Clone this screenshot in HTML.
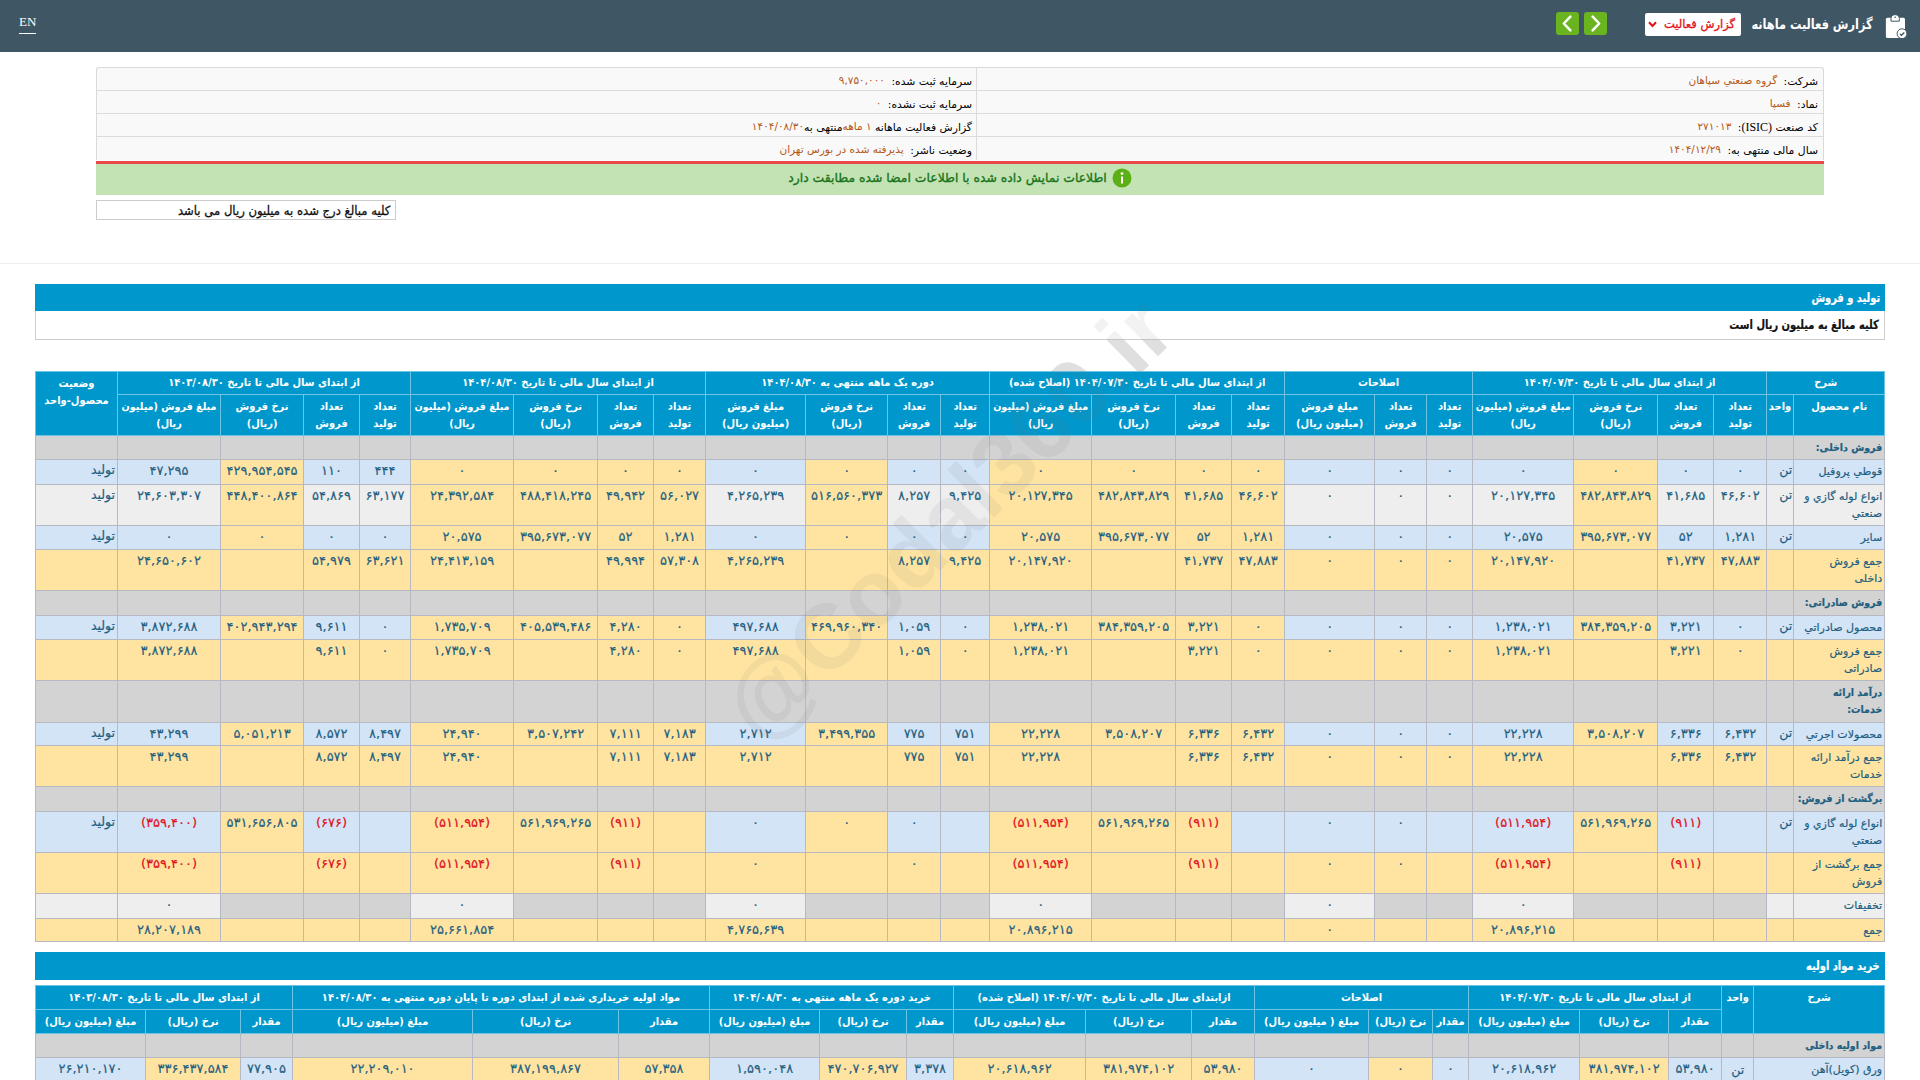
<!DOCTYPE html>
<html lang="fa" dir="rtl">
<head>
<meta charset="utf-8">
<title>گزارش فعالیت ماهانه</title>
<style>
html,body{margin:0;padding:0;background:#fff;}
body{width:1920px;height:1080px;overflow:hidden;position:relative;font-family:"DejaVu Sans","Liberation Sans",sans-serif;font-size:11px;color:#000;direction:rtl;}
.abs{position:absolute;}
#top{left:0;top:0;width:1920px;height:52px;background:#3f5765;}
#en{left:19px;top:14px;color:#fff;font-family:"Liberation Serif",serif;font-size:13px;direction:ltr;border-bottom:1px solid #fff;padding-bottom:4px;line-height:15px;}
#title{right:47px;top:13px;color:#fff;font-weight:bold;font-size:14px;transform:scaleX(0.9);transform-origin:right center;font-family:"DejaVu Sans Condensed","DejaVu Sans",sans-serif;font-stretch:condensed;line-height:22px;white-space:nowrap;}
#sel{left:1645px;top:13px;width:96px;height:23px;background:#fff;border-radius:2px;color:#e0141c;font-size:11.5px;line-height:22px;-webkit-text-stroke:0.3px #e0141c;white-space:nowrap;box-sizing:border-box;padding-right:6px;}
.gb{top:12px;width:23px;height:23px;background:#6ab41f;border-radius:3px;}
#info{left:96px;top:67px;width:1728px;border:1px solid #d9d9d9;border-bottom:none;box-sizing:border-box;border-radius:3px 3px 0 0;background:#f9f9f9;}
#info .r{height:23px;border-bottom:1px solid #dcdcdc;box-sizing:border-box;position:relative;line-height:26px;font-size:10.8px;white-space:nowrap;}
#info .r:last-child{border-bottom:none;}
#info .c1{position:absolute;right:0;width:847px;top:0;bottom:0;padding-right:5px;box-sizing:border-box;border-left:1px solid #dcdcdc;}
#info .c2{position:absolute;right:847px;left:0;top:0;bottom:0;padding-right:4px;}
#info .v{color:#b4581a;margin-right:3px;font-size:10.5px;position:relative;top:-1px;}
#red{left:96px;top:161px;width:1728px;height:3px;background:#e8484a;z-index:2;}
#green{left:96px;top:163px;width:1728px;height:32px;background:#c3e3b5;box-sizing:border-box;color:#1a741a;font-size:12.4px;line-height:29px;text-align:center;-webkit-text-stroke:0.35px #1a741a;}
#note{left:96px;top:200px;width:300px;height:20px;border:1px solid #ccc;box-sizing:border-box;font-size:12.5px;line-height:19px;padding-right:5px;white-space:nowrap;color:#111;-webkit-text-stroke:0.3px #111;}
#hr{left:0;top:263px;width:1920px;height:1px;background:#eee;}
.bar{z-index:1;left:35px;width:1850px;background:#0098cc;color:#fff;font-weight:bold;font-size:11px;font-family:"DejaVu Sans Condensed","DejaVu Sans",sans-serif;font-stretch:condensed;box-sizing:border-box;padding-right:5px;white-space:nowrap;}
#bar1{top:284px;height:27px;line-height:27px;}
#sub1{z-index:1;background:#fff;left:35px;top:311px;width:1850px;height:29px;border:1px solid #ccc;border-top:none;box-sizing:border-box;font-weight:bold;font-size:11px;font-family:"DejaVu Sans Condensed","DejaVu Sans",sans-serif;font-stretch:condensed;line-height:28px;padding-right:5px;color:#111;}
#bar2{top:952px;height:28px;line-height:28px;}
table.t{z-index:1;position:absolute;left:35px;border-collapse:collapse;table-layout:fixed;width:1850px;font-size:11px;direction:rtl;}
table.t1{top:371px;}
table.t2{top:985px;}
table.t th{background:#0098cc;color:#fff;font-weight:bold;font-family:"DejaVu Sans Condensed","DejaVu Sans",sans-serif;font-stretch:condensed;border:1px solid #6cc4e4;padding:0 2px;text-align:center;line-height:17px;font-size:11px;vertical-align:middle;overflow:hidden;}
table.t tr:first-child th{padding-bottom:1px;}
table.t th.vt{vertical-align:top;padding-top:3px;}
table.t th.vt2{vertical-align:top;padding-top:3px;}
table.t tr.h2 th{vertical-align:top;padding-top:3px;}
table.t td{-webkit-text-stroke:0.2px currentColor;border:1px solid #b6b8c2;padding:3px 2px 0 2px;text-align:center;vertical-align:top;color:#1f5f80;line-height:17px;overflow:hidden;}
td.b{background:#d4e4f7;}
td.y{background:#ffe4a1;}
td.g{background:#d3d3d3;}
td.l{background:#eeeeee;}
td.r{color:#e01020 !important;}
td.n{text-align:right !important;padding-right:2px;white-space:nowrap;}
td.s{text-align:right !important;font-size:12.5px;padding-top:1px !important;}
td.u{text-align:right !important;font-size:12.5px;padding-right:1px !important;padding-top:1px !important;}
td.sec{font-weight:bold;font-size:10.5px;font-family:"DejaVu Sans Condensed","DejaVu Sans",sans-serif;font-stretch:condensed;}
td.num{font-size:13px;padding-top:2px !important;-webkit-text-stroke:0.3px currentColor;}
.sx{display:inline-block;font-size:12.5px;transform:scaleX(0.88);transform-origin:right center;-webkit-text-stroke:0.2px currentColor;}
th.nw{font-size:10.7px !important;white-space:nowrap;padding:0 !important;padding-top:3px !important;}
.wm{left:655px;top:468px;font-family:"Liberation Sans",sans-serif;font-weight:bold;font-size:92px;line-height:100px;transform:rotate(-44.5deg);transform-origin:center;direction:ltr;white-space:nowrap;pointer-events:none;}
#wm1{color:rgba(110,110,110,0.14);z-index:0;}
#wm2{color:rgba(110,110,110,0.09);z-index:3;}
</style>
</head>
<body>
<div id="top" class="abs"></div>
<div id="en" class="abs">EN</div>
<svg class="abs" style="left:1884px;top:13px" width="26" height="28" viewBox="0 0 26 28"><rect x="1.9" y="4.7" width="19.1" height="20.4" rx="1.6" fill="#fff"/><path d="M7 8.2V5.6a4.15 3.9 0 0 1 8.3 0v2.6z" fill="#fff" stroke="#3f5765" stroke-width="1"/><circle cx="11.2" cy="4.3" r="0.8" fill="#3f5765"/><circle cx="18" cy="20.7" r="4.9" fill="#fff" stroke="#3f5765" stroke-width="1"/><path d="M16 20.9l1.5 1.4 2.8-2.9" stroke="#3f5765" stroke-width="1.4" fill="none"/></svg>
<div id="title" class="abs">گزارش فعالیت ماهانه</div>
<div id="sel" class="abs">گزارش فعالیت<svg style="position:absolute;left:3px;top:8px" width="9" height="7" viewBox="0 0 9 7"><path d="M1 1.2l3.5 3.8L8 1.2" stroke="#e0141c" stroke-width="2.1" fill="none"/></svg></div>
<div class="abs gb" style="left:1584px"><svg width="23" height="23" viewBox="0 0 23 23"><path d="M8.6 4.6l6.6 6.9-6.6 6.9" stroke="#fff" stroke-width="2.5" fill="none" stroke-linecap="round" stroke-linejoin="round"/></svg></div>
<div class="abs gb" style="left:1556px"><svg width="23" height="23" viewBox="0 0 23 23"><path d="M14.4 4.6l-6.6 6.9 6.6 6.9" stroke="#fff" stroke-width="2.5" fill="none" stroke-linecap="round" stroke-linejoin="round"/></svg></div>

<div id="info" class="abs">
<div class="r"><div class="c1">شرکت: <span class="v">گروه صنعتي سپاهان</span></div><div class="c2">سرمایه ثبت شده: <span class="v">۹,۷۵۰,۰۰۰</span></div></div>
<div class="r"><div class="c1">نماد: <span class="v">فسپا</span></div><div class="c2">سرمایه ثبت نشده: <span class="v">۰</span></div></div>
<div class="r"><div class="c1">کد صنعت <span style="font-family:'Liberation Serif',serif;font-size:12px">(ISIC)</span>: <span class="v">۲۷۱۰۱۳</span></div><div class="c2">گزارش فعالیت ماهانه <span class="v" style="margin:0">۱ ماهه</span>&zwnj;منتهی به<span class="v" style="margin:0">۱۴۰۴/۰۸/۳۰</span></div></div>
<div class="r"><div class="c1">سال مالی منتهی به: <span class="v">۱۴۰۴/۱۲/۲۹</span></div><div class="c2">وضعیت ناشر: <span class="v">پذیرفته شده در بورس تهران</span></div></div>
</div>
<div id="red" class="abs"></div>
<div id="green" class="abs"><svg style="vertical-align:middle;margin-left:5px;position:relative;top:-1px" width="20" height="20" viewBox="0 0 20 20"><circle cx="10" cy="10" r="9.5" fill="#5cb015"/><circle cx="10" cy="5.6" r="1.4" fill="#fff"/><rect x="9" y="8.2" width="2" height="7.6" rx="1" fill="#fff"/></svg>اطلاعات نمایش داده شده با اطلاعات امضا شده مطابقت دارد</div>
<div id="note" class="abs"><span style="display:inline-block;transform:scaleX(0.93);transform-origin:right center">کلیه مبالغ درج شده به میلیون ریال می باشد</span></div>
<div id="hr" class="abs"></div>
<div id="bar1" class="abs bar"><span class="sx">تولید و فروش</span></div>
<div id="sub1" class="abs"><span class="sx">کلیه مبالغ به میلیون ریال است</span></div>
<table class="t t1"><colgroup><col style="width:91px"><col style="width:27px"><col style="width:53px"><col style="width:56px"><col style="width:84px"><col style="width:101px"><col style="width:46px"><col style="width:52px"><col style="width:90px"><col style="width:53px"><col style="width:56px"><col style="width:84px"><col style="width:102px"><col style="width:49px"><col style="width:53px"><col style="width:82px"><col style="width:100px"><col style="width:52px"><col style="width:56px"><col style="width:84px"><col style="width:103px"><col style="width:51px"><col style="width:56px"><col style="width:83px"><col style="width:103px"><col style="width:82px"></colgroup>
<tr style="height:23px"><th colspan="2">شرح</th><th colspan="4">از ابتدای سال مالی تا تاریخ ۱۴۰۴/۰۷/۳۰</th><th colspan="3">اصلاحات</th><th colspan="4">از ابتدای سال مالی تا تاریخ ۱۴۰۴/۰۷/۳۰ (اصلاح شده)</th><th colspan="4">دوره یک ماهه منتهی به ۱۴۰۴/۰۸/۳۰</th><th colspan="4">از ابتدای سال مالی تا تاریخ ۱۴۰۴/۰۸/۳۰</th><th colspan="4">از ابتدای سال مالی تا تاریخ ۱۴۰۳/۰۸/۳۰</th><th rowspan="2" class="vt">وضعیت محصول-واحد</th></tr>
<tr style="height:41px" class="h2"><th>نام محصول</th><th>واحد</th><th>تعداد<br>تولید</th><th>تعداد<br>فروش</th><th>نرخ فروش<br>(ریال)</th><th class="nw">مبلغ فروش (میلیون<br>ریال)</th><th>تعداد<br>تولید</th><th>تعداد<br>فروش</th><th>مبلغ فروش<br>(میلیون ریال)</th><th>تعداد<br>تولید</th><th>تعداد<br>فروش</th><th>نرخ فروش<br>(ریال)</th><th class="nw">مبلغ فروش (میلیون<br>ریال)</th><th>تعداد<br>تولید</th><th>تعداد<br>فروش</th><th>نرخ فروش<br>(ریال)</th><th>مبلغ فروش<br>(میلیون ریال)</th><th>تعداد<br>تولید</th><th>تعداد<br>فروش</th><th>نرخ فروش<br>(ریال)</th><th class="nw">مبلغ فروش (میلیون<br>ریال)</th><th>تعداد<br>تولید</th><th>تعداد<br>فروش</th><th>نرخ فروش<br>(ریال)</th><th class="nw">مبلغ فروش (میلیون<br>ریال)</th></tr>
<tr style="height:24px"><td class="g n sec">فروش داخلی:</td><td class="g u"></td><td class="g num"></td><td class="g num"></td><td class="g num"></td><td class="g num"></td><td class="g num"></td><td class="g num"></td><td class="g num"></td><td class="g num"></td><td class="g num"></td><td class="g num"></td><td class="g num"></td><td class="g num"></td><td class="g num"></td><td class="g num"></td><td class="g num"></td><td class="g num"></td><td class="g num"></td><td class="g num"></td><td class="g num"></td><td class="g num"></td><td class="g num"></td><td class="g num"></td><td class="g num"></td><td class="g s"></td></tr>
<tr style="height:25px"><td class="b n">قوطي پروفيل</td><td class="b u">تن</td><td class="b num">۰</td><td class="b num">۰</td><td class="y num">۰</td><td class="b num">۰</td><td class="b num">۰</td><td class="b num">۰</td><td class="b num">۰</td><td class="y num">۰</td><td class="y num">۰</td><td class="y num">۰</td><td class="y num">۰</td><td class="b num">۰</td><td class="b num">۰</td><td class="y num">۰</td><td class="b num">۰</td><td class="y num">۰</td><td class="y num">۰</td><td class="y num">۰</td><td class="y num">۰</td><td class="b num">۴۴۴</td><td class="b num">۱۱۰</td><td class="y num">۴۲۹,۹۵۴,۵۴۵</td><td class="b num">۴۷,۲۹۵</td><td class="b s">تولید</td></tr>
<tr style="height:41px"><td class="l n">انواع لوله گازي و<br>صنعتي</td><td class="l u">تن</td><td class="l num">۴۶,۶۰۲</td><td class="l num">۴۱,۶۸۵</td><td class="y num">۴۸۲,۸۴۳,۸۲۹</td><td class="l num">۲۰,۱۲۷,۳۴۵</td><td class="l num">۰</td><td class="l num">۰</td><td class="l num">۰</td><td class="y num">۴۶,۶۰۲</td><td class="y num">۴۱,۶۸۵</td><td class="y num">۴۸۲,۸۴۳,۸۲۹</td><td class="y num">۲۰,۱۲۷,۳۴۵</td><td class="l num">۹,۴۲۵</td><td class="l num">۸,۲۵۷</td><td class="y num">۵۱۶,۵۶۰,۳۷۳</td><td class="l num">۴,۲۶۵,۲۳۹</td><td class="y num">۵۶,۰۲۷</td><td class="y num">۴۹,۹۴۲</td><td class="y num">۴۸۸,۴۱۸,۲۴۵</td><td class="y num">۲۴,۳۹۲,۵۸۴</td><td class="l num">۶۳,۱۷۷</td><td class="l num">۵۴,۸۶۹</td><td class="y num">۴۴۸,۴۰۰,۸۶۴</td><td class="l num">۲۴,۶۰۳,۳۰۷</td><td class="l s">تولید</td></tr>
<tr style="height:24px"><td class="b n">ساير</td><td class="b u">تن</td><td class="b num">۱,۲۸۱</td><td class="b num">۵۲</td><td class="y num">۳۹۵,۶۷۳,۰۷۷</td><td class="b num">۲۰,۵۷۵</td><td class="b num">۰</td><td class="b num">۰</td><td class="b num">۰</td><td class="y num">۱,۲۸۱</td><td class="y num">۵۲</td><td class="y num">۳۹۵,۶۷۳,۰۷۷</td><td class="y num">۲۰,۵۷۵</td><td class="b num">۰</td><td class="b num">۰</td><td class="y num">۰</td><td class="b num">۰</td><td class="y num">۱,۲۸۱</td><td class="y num">۵۲</td><td class="y num">۳۹۵,۶۷۳,۰۷۷</td><td class="y num">۲۰,۵۷۵</td><td class="b num">۰</td><td class="b num">۰</td><td class="y num">۰</td><td class="b num">۰</td><td class="b s">تولید</td></tr>
<tr style="height:41px"><td class="y n">جمع فروش<br>داخلی</td><td class="y u"></td><td class="y num">۴۷,۸۸۳</td><td class="y num">۴۱,۷۳۷</td><td class="y num"></td><td class="y num">۲۰,۱۴۷,۹۲۰</td><td class="y num">۰</td><td class="y num">۰</td><td class="y num">۰</td><td class="y num">۴۷,۸۸۳</td><td class="y num">۴۱,۷۳۷</td><td class="y num"></td><td class="y num">۲۰,۱۴۷,۹۲۰</td><td class="y num">۹,۴۲۵</td><td class="y num">۸,۲۵۷</td><td class="y num"></td><td class="y num">۴,۲۶۵,۲۳۹</td><td class="y num">۵۷,۳۰۸</td><td class="y num">۴۹,۹۹۴</td><td class="y num"></td><td class="y num">۲۴,۴۱۳,۱۵۹</td><td class="y num">۶۳,۶۲۱</td><td class="y num">۵۴,۹۷۹</td><td class="y num"></td><td class="y num">۲۴,۶۵۰,۶۰۲</td><td class="y s"></td></tr>
<tr style="height:25px"><td class="g n sec">فروش صادراتی:</td><td class="g u"></td><td class="g num"></td><td class="g num"></td><td class="g num"></td><td class="g num"></td><td class="g num"></td><td class="g num"></td><td class="g num"></td><td class="g num"></td><td class="g num"></td><td class="g num"></td><td class="g num"></td><td class="g num"></td><td class="g num"></td><td class="g num"></td><td class="g num"></td><td class="g num"></td><td class="g num"></td><td class="g num"></td><td class="g num"></td><td class="g num"></td><td class="g num"></td><td class="g num"></td><td class="g num"></td><td class="g s"></td></tr>
<tr style="height:24px"><td class="b n">محصول صادراتي</td><td class="b u">تن</td><td class="b num">۰</td><td class="b num">۳,۲۲۱</td><td class="y num">۳۸۴,۳۵۹,۲۰۵</td><td class="b num">۱,۲۳۸,۰۲۱</td><td class="b num">۰</td><td class="b num">۰</td><td class="b num">۰</td><td class="y num">۰</td><td class="y num">۳,۲۲۱</td><td class="y num">۳۸۴,۳۵۹,۲۰۵</td><td class="y num">۱,۲۳۸,۰۲۱</td><td class="b num">۰</td><td class="b num">۱,۰۵۹</td><td class="y num">۴۶۹,۹۶۰,۳۴۰</td><td class="b num">۴۹۷,۶۸۸</td><td class="y num">۰</td><td class="y num">۴,۲۸۰</td><td class="y num">۴۰۵,۵۳۹,۴۸۶</td><td class="y num">۱,۷۳۵,۷۰۹</td><td class="b num">۰</td><td class="b num">۹,۶۱۱</td><td class="y num">۴۰۲,۹۴۳,۲۹۴</td><td class="b num">۳,۸۷۲,۶۸۸</td><td class="b s">تولید</td></tr>
<tr style="height:41px"><td class="y n">جمع فروش<br>صادراتی</td><td class="y u"></td><td class="y num">۰</td><td class="y num">۳,۲۲۱</td><td class="y num"></td><td class="y num">۱,۲۳۸,۰۲۱</td><td class="y num">۰</td><td class="y num">۰</td><td class="y num">۰</td><td class="y num">۰</td><td class="y num">۳,۲۲۱</td><td class="y num"></td><td class="y num">۱,۲۳۸,۰۲۱</td><td class="y num">۰</td><td class="y num">۱,۰۵۹</td><td class="y num"></td><td class="y num">۴۹۷,۶۸۸</td><td class="y num">۰</td><td class="y num">۴,۲۸۰</td><td class="y num"></td><td class="y num">۱,۷۳۵,۷۰۹</td><td class="y num">۰</td><td class="y num">۹,۶۱۱</td><td class="y num"></td><td class="y num">۳,۸۷۲,۶۸۸</td><td class="y s"></td></tr>
<tr style="height:42px"><td class="g n sec">درآمد ارائه<br>خدمات:</td><td class="g u"></td><td class="g num"></td><td class="g num"></td><td class="g num"></td><td class="g num"></td><td class="g num"></td><td class="g num"></td><td class="g num"></td><td class="g num"></td><td class="g num"></td><td class="g num"></td><td class="g num"></td><td class="g num"></td><td class="g num"></td><td class="g num"></td><td class="g num"></td><td class="g num"></td><td class="g num"></td><td class="g num"></td><td class="g num"></td><td class="g num"></td><td class="g num"></td><td class="g num"></td><td class="g num"></td><td class="g s"></td></tr>
<tr style="height:23px"><td class="b n">محصولات اجرتي</td><td class="b u">تن</td><td class="b num">۶,۴۳۲</td><td class="b num">۶,۳۳۶</td><td class="y num">۳,۵۰۸,۲۰۷</td><td class="b num">۲۲,۲۲۸</td><td class="b num">۰</td><td class="b num">۰</td><td class="b num">۰</td><td class="y num">۶,۴۳۲</td><td class="y num">۶,۳۳۶</td><td class="y num">۳,۵۰۸,۲۰۷</td><td class="y num">۲۲,۲۲۸</td><td class="b num">۷۵۱</td><td class="b num">۷۷۵</td><td class="y num">۳,۴۹۹,۳۵۵</td><td class="b num">۲,۷۱۲</td><td class="y num">۷,۱۸۳</td><td class="y num">۷,۱۱۱</td><td class="y num">۳,۵۰۷,۲۴۲</td><td class="y num">۲۴,۹۴۰</td><td class="b num">۸,۴۹۷</td><td class="b num">۸,۵۷۲</td><td class="y num">۵,۰۵۱,۲۱۳</td><td class="b num">۴۳,۲۹۹</td><td class="b s">تولید</td></tr>
<tr style="height:41px"><td class="y n">جمع درآمد ارائه<br>خدمات</td><td class="y u"></td><td class="y num">۶,۴۳۲</td><td class="y num">۶,۳۳۶</td><td class="y num"></td><td class="y num">۲۲,۲۲۸</td><td class="y num">۰</td><td class="y num">۰</td><td class="y num">۰</td><td class="y num">۶,۴۳۲</td><td class="y num">۶,۳۳۶</td><td class="y num"></td><td class="y num">۲۲,۲۲۸</td><td class="y num">۷۵۱</td><td class="y num">۷۷۵</td><td class="y num"></td><td class="y num">۲,۷۱۲</td><td class="y num">۷,۱۸۳</td><td class="y num">۷,۱۱۱</td><td class="y num"></td><td class="y num">۲۴,۹۴۰</td><td class="y num">۸,۴۹۷</td><td class="y num">۸,۵۷۲</td><td class="y num"></td><td class="y num">۴۳,۲۹۹</td><td class="y s"></td></tr>
<tr style="height:25px"><td class="g n sec">برگشت از فروش:</td><td class="g u"></td><td class="g num"></td><td class="g num"></td><td class="g num"></td><td class="g num"></td><td class="g num"></td><td class="g num"></td><td class="g num"></td><td class="g num"></td><td class="g num"></td><td class="g num"></td><td class="g num"></td><td class="g num"></td><td class="g num"></td><td class="g num"></td><td class="g num"></td><td class="g num"></td><td class="g num"></td><td class="g num"></td><td class="g num"></td><td class="g num"></td><td class="g num"></td><td class="g num"></td><td class="g num"></td><td class="g s"></td></tr>
<tr style="height:41px"><td class="b n">انواع لوله گازي و<br>صنعتي</td><td class="b u">تن</td><td class="b num"></td><td class="b num r">(۹۱۱)</td><td class="y num">۵۶۱,۹۶۹,۲۶۵</td><td class="b num r">(۵۱۱,۹۵۴)</td><td class="b num"></td><td class="b num">۰</td><td class="b num">۰</td><td class="b num"></td><td class="y num r">(۹۱۱)</td><td class="y num">۵۶۱,۹۶۹,۲۶۵</td><td class="y num r">(۵۱۱,۹۵۴)</td><td class="b num"></td><td class="b num">۰</td><td class="y num">۰</td><td class="b num">۰</td><td class="y num"></td><td class="y num r">(۹۱۱)</td><td class="y num">۵۶۱,۹۶۹,۲۶۵</td><td class="y num r">(۵۱۱,۹۵۴)</td><td class="b num"></td><td class="b num r">(۶۷۶)</td><td class="y num">۵۳۱,۶۵۶,۸۰۵</td><td class="b num r">(۳۵۹,۴۰۰)</td><td class="b s">تولید</td></tr>
<tr style="height:41px"><td class="y n">جمع برگشت از<br>فروش</td><td class="y u"></td><td class="y num"></td><td class="y num r">(۹۱۱)</td><td class="y num"></td><td class="y num r">(۵۱۱,۹۵۴)</td><td class="y num"></td><td class="y num">۰</td><td class="y num">۰</td><td class="y num"></td><td class="y num r">(۹۱۱)</td><td class="y num"></td><td class="y num r">(۵۱۱,۹۵۴)</td><td class="y num"></td><td class="y num">۰</td><td class="y num"></td><td class="y num">۰</td><td class="y num"></td><td class="y num r">(۹۱۱)</td><td class="y num"></td><td class="y num r">(۵۱۱,۹۵۴)</td><td class="y num"></td><td class="y num r">(۶۷۶)</td><td class="y num"></td><td class="y num r">(۳۵۹,۴۰۰)</td><td class="y s"></td></tr>
<tr style="height:25px"><td class="l n">تخفیفات</td><td class="l u"></td><td class="g num"></td><td class="g num"></td><td class="g num"></td><td class="l num">۰</td><td class="g num"></td><td class="g num"></td><td class="l num">۰</td><td class="g num"></td><td class="g num"></td><td class="g num"></td><td class="l num">۰</td><td class="g num"></td><td class="g num"></td><td class="g num"></td><td class="l num">۰</td><td class="g num"></td><td class="g num"></td><td class="g num"></td><td class="l num">۰</td><td class="g num"></td><td class="g num"></td><td class="g num"></td><td class="l num">۰</td><td class="l s"></td></tr>
<tr style="height:23px"><td class="y n">جمع</td><td class="y u"></td><td class="y num"></td><td class="y num"></td><td class="y num"></td><td class="y num">۲۰,۸۹۶,۲۱۵</td><td class="y num"></td><td class="y num"></td><td class="y num">۰</td><td class="y num"></td><td class="y num"></td><td class="y num"></td><td class="y num">۲۰,۸۹۶,۲۱۵</td><td class="y num"></td><td class="y num"></td><td class="y num"></td><td class="y num">۴,۷۶۵,۶۳۹</td><td class="y num"></td><td class="y num"></td><td class="y num"></td><td class="y num">۲۵,۶۶۱,۸۵۴</td><td class="y num"></td><td class="y num"></td><td class="y num"></td><td class="y num">۲۸,۲۰۷,۱۸۹</td><td class="y s"></td></tr>
</table>
<div id="bar2" class="abs bar"><span class="sx">خرید مواد اولیه</span></div>
<table class="t t2"><colgroup><col style="width:131px"><col style="width:32px"><col style="width:53px"><col style="width:89px"><col style="width:111px"><col style="width:36px"><col style="width:64px"><col style="width:114px"><col style="width:63px"><col style="width:106px"><col style="width:132px"><col style="width:47px"><col style="width:87px"><col style="width:110px"><col style="width:91px"><col style="width:146px"><col style="width:180px"><col style="width:52px"><col style="width:95px"><col style="width:110px"></colgroup>
<tr style="height:24px"><th rowspan="2" class="vt2">شرح</th><th rowspan="2" class="vt2">واحد</th><th colspan="3">از ابتدای سال مالی تا تاریخ ۱۴۰۴/۰۷/۳۰</th><th colspan="3">اصلاحات</th><th colspan="3">ازابتدای سال مالی تا تاریخ ۱۴۰۴/۰۷/۳۰ (اصلاح شده)</th><th colspan="3">خرید دوره یک ماهه منتهی به ۱۴۰۴/۰۸/۳۰</th><th colspan="3">مواد اولیه خریداری شده از ابتدای دوره تا پایان دوره منتهی به ۱۴۰۴/۰۸/۳۰</th><th colspan="3">از ابتدای سال مالی تا تاریخ ۱۴۰۳/۰۸/۳۰</th></tr>
<tr style="height:24px"><th>مقدار</th><th>نرخ (ریال)</th><th>مبلغ (میلیون ریال)</th><th>مقدار</th><th>نرخ (ریال)</th><th>مبلغ ( میلیون ریال)</th><th>مقدار</th><th>نرخ (ریال)</th><th>مبلغ (میلیون ریال)</th><th>مقدار</th><th>نرخ (ریال)</th><th>مبلغ (میلیون ریال)</th><th>مقدار</th><th>نرخ (ریال)</th><th>مبلغ (میلیون ریال)</th><th>مقدار</th><th>نرخ (ریال)</th><th>مبلغ (میلیون ریال)</th></tr>
<tr style="height:24px"><td class="g n sec">مواد اولیه داخلی</td><td class="g"></td><td class="g"></td><td class="g"></td><td class="g"></td><td class="g"></td><td class="g"></td><td class="g"></td><td class="g"></td><td class="g"></td><td class="g"></td><td class="g"></td><td class="g"></td><td class="g"></td><td class="g"></td><td class="g"></td><td class="g"></td><td class="g"></td><td class="g"></td><td class="g"></td></tr>
<tr style="height:25px"><td class="b n">ورق (کویل)آهن</td><td class="b" style="font-size:12.5px">تن</td><td class="b num">۵۳,۹۸۰</td><td class="y num">۳۸۱,۹۷۴,۱۰۲</td><td class="b num">۲۰,۶۱۸,۹۶۲</td><td class="b num">۰</td><td class="y num">۰</td><td class="b num">۰</td><td class="y num">۵۳,۹۸۰</td><td class="y num">۳۸۱,۹۷۴,۱۰۲</td><td class="y num">۲۰,۶۱۸,۹۶۲</td><td class="b num">۳,۳۷۸</td><td class="y num">۴۷۰,۷۰۶,۹۲۷</td><td class="b num">۱,۵۹۰,۰۴۸</td><td class="y num">۵۷,۳۵۸</td><td class="y num">۳۸۷,۱۹۹,۸۶۷</td><td class="y num">۲۲,۲۰۹,۰۱۰</td><td class="b num">۷۷,۹۰۵</td><td class="y num">۳۳۶,۴۳۷,۵۸۴</td><td class="b num">۲۶,۲۱۰,۱۷۰</td></tr>
</table>
<div id="wm1" class="abs wm">@Codal360.ir</div>
<div id="wm2" class="abs wm">@Codal360.ir</div>
</body>
</html>
